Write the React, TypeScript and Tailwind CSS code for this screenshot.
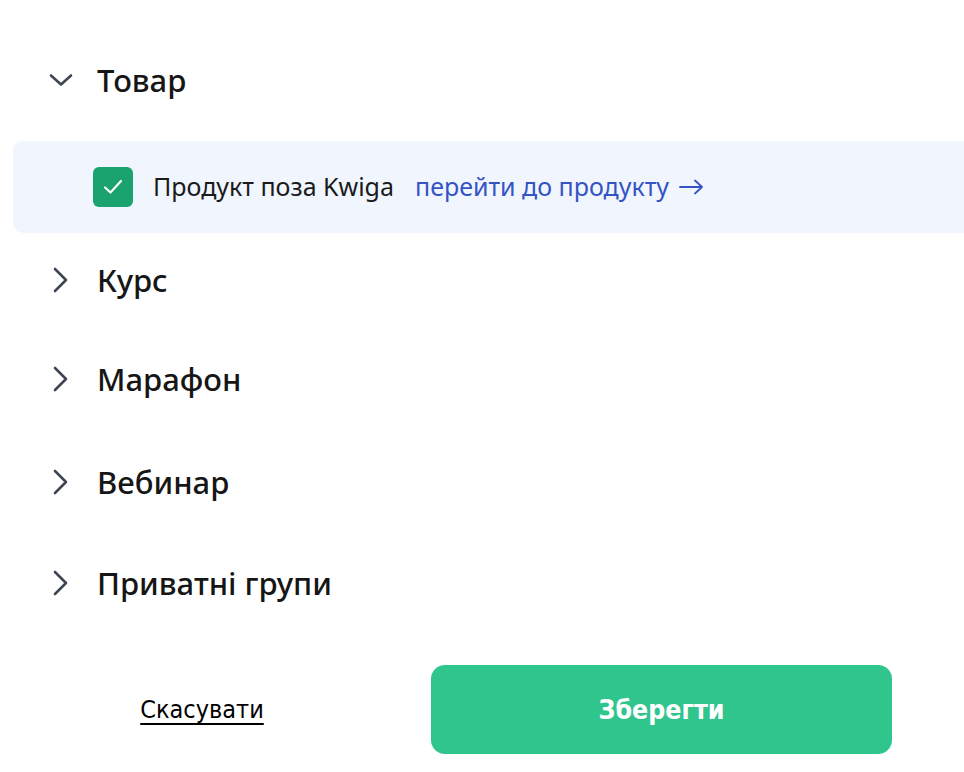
import React, { useState } from 'react';

const font = { fontFamily: '"Noto Sans", "Open Sans", sans-serif' };
const condensed = { fontFamily: '"DejaVu Sans Condensed", "DejaVu Sans", sans-serif' };

function ChevronDown() {
  return (
    <svg width="24" height="24" viewBox="0 0 24 24" fill="none" stroke="#3f4653" strokeWidth="2.6" strokeLinecap="round" strokeLinejoin="round">
      <path d="M2 6.5l10 9 10-9" />
    </svg>
  );
}

function ChevronRight() {
  return (
    <svg width="24" height="26" viewBox="0 0 24 26" fill="none" stroke="#3f4653" strokeWidth="2.6" strokeLinecap="round" strokeLinejoin="round">
      <path d="M6 2l11 11L6 24" />
    </svg>
  );
}

const sections = [
  { title: 'Курс', h: 'h-[94px]' },
  { title: 'Марафон', h: 'h-[104px]' },
  { title: 'Вебинар', h: 'h-[101.5px]' },
  { title: 'Приватні групи', h: 'h-[101.5px]' },
];

export default function App() {
  const [checked, setChecked] = useState(true);

  return (
    <div className="w-[964px] h-[772px] overflow-hidden bg-white" style={font}>
      <div className="pt-[30px]">
        <div className="h-[101px] flex items-center pl-[49px]">
          <ChevronDown />
          <span className="ml-[24px] text-[31px] font-medium text-[#161616]">Товар</span>
        </div>

        <div className="ml-[13px] mt-[10px] w-[990px] h-[92px] rounded-[10px] bg-[#f1f6fe] flex items-center pl-[80px]">
          <button
            type="button"
            onClick={() => setChecked(!checked)}
            className="w-[40px] h-[40px] rounded-[6px] bg-[#1aa36e] flex items-center justify-center"
          >
            {checked && (
              <svg width="22" height="22" viewBox="0 0 22 22" fill="none" stroke="white" strokeWidth="2.2" strokeLinecap="round" strokeLinejoin="round">
                <path d="M3 11.5l5.5 5L19 5" />
              </svg>
            )}
          </button>
          <span className="ml-[20px] text-[25px] text-[#1b1b1b]">Продукт поза Kwiga</span>
          <a href="#" className="ml-[21px] text-[25px] text-[#3554c4] flex items-center gap-[10px]">
            перейти до продукту
            <svg width="25" height="16" viewBox="0 0 25 16" fill="none" stroke="#3554c4" strokeWidth="1.8" strokeLinecap="round" strokeLinejoin="round">
              <path d="M1 8h22M16 1.5l7 6.5-7 6.5" />
            </svg>
          </a>
        </div>

        {sections.map((s) => (
          <div key={s.title} className={`${s.h} flex items-center pl-[49px]`}>
            <ChevronRight />
            <span className="ml-[24px] text-[31px] font-medium text-[#161616]">{s.title}</span>
          </div>
        ))}
      </div>

      <div className="mt-[31px] flex items-center">
        <div className="w-[431px] flex justify-center pr-[27px]">
          <a href="#" className="text-[25px] text-black underline decoration-2 underline-offset-[5px]" style={condensed}>
            Скасувати
          </a>
        </div>
        <button
          type="button"
          className="w-[461px] h-[89px] rounded-[14px] bg-[#31c58e] text-white text-[26.5px] font-bold"
          style={condensed}
        >
          Зберегти
        </button>
      </div>
    </div>
  );
}
